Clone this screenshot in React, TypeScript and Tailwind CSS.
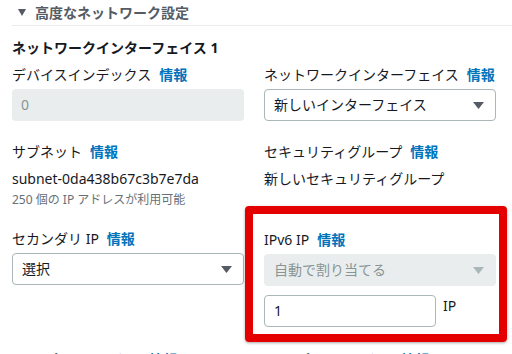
const font = { fontFamily: '"Noto Sans", "Noto Sans CJK JP", sans-serif' };

function Info() {
  return <span className="ml-2 font-bold text-[#0073bb]">情報</span>;
}

function Caret({ muted }: { muted?: boolean }) {
  return (
    <svg width="11" height="7" viewBox="0 0 11 7" className="shrink-0">
      <polygon points="0,0 11,0 5.5,7" fill={muted ? "#aab7b8" : "#545b64"} />
    </svg>
  );
}

function Label({ children }: { children: React.ReactNode }) {
  return <div className="h-5 text-sm leading-5 text-[#16191f] whitespace-nowrap">{children}</div>;
}

function Select({ value, disabled }: { value: string; disabled?: boolean }) {
  return (
    <div
      className={
        disabled
          ? "mt-1 flex h-8 items-center justify-between rounded-sm bg-[#eaeded] pl-[10px] pr-3 text-sm text-[#879596]"
          : "mt-1 flex h-8 items-center justify-between rounded-sm border border-[#aab7b8] bg-white pl-[9px] pr-[11px] text-sm text-[#16191f]"
      }
    >
      <span>{value}</span>
      <Caret muted={disabled} />
    </div>
  );
}

export default function App() {
  return (
    <div className="h-[354px] w-[512px] overflow-hidden bg-white" style={font}>
      {/* Section header */}
      <div className="flex h-[25px] items-center pl-[18px] text-sm font-bold text-[#545b64]">
        <svg width="8" height="7" viewBox="0 0 8 7" className="shrink-0">
          <polygon points="0,0 8,0 4,7" fill="#545b64" />
        </svg>
        <span className="ml-[9px]">高度なネットワーク設定</span>
      </div>
      <div className="ml-3 h-px bg-[#eaeded]" />

      <div className="pl-3 pr-4">
        <div className="mt-3 h-5 text-sm font-bold leading-5 text-[#16191f]">ネットワークインターフェイス 1</div>

        <div className="mt-[7px] grid w-[484px] grid-cols-2 gap-x-5">
          {/* Row 1 */}
          <div>
            <Label>
              デバイスインデックス<Info />
            </Label>
            <div className="mt-1 flex h-8 items-center rounded-sm bg-[#eaeded] pl-[9px] text-sm text-[#879596]">0</div>
          </div>
          <div>
            <Label>
              ネットワークインターフェイス<Info />
            </Label>
            <Select value="新しいインターフェイス" />
          </div>

          {/* Row 2 */}
          <div className="mt-[21px]">
            <Label>
              サブネット<Info />
            </Label>
            <div className="mt-[7px] h-5 text-sm leading-5 text-[#16191f]">subnet-0da438b67c3b7e7da</div>
            <div className="mt-[3px] h-4 text-xs leading-4 text-[#687078]">250 個の IP アドレスが利用可能</div>
          </div>
          <div className="mt-[21px]">
            <Label>
              セキュリティグループ<Info />
            </Label>
            <div className="mt-[7px] h-5 text-sm leading-5 text-[#16191f]">新しいセキュリティグループ</div>
          </div>

          {/* Row 3 */}
          <div className="mt-[21px]">
            <Label>
              セカンダリ IP<Info />
            </Label>
            <Select value="選択" />
          </div>
          <div className="relative mt-[22px]">
            <Label>
              IPv6 IP<Info />
            </Label>
            <Select value="自動で割り当てる" disabled />
            <div className="mt-[9px] flex items-start">
              <div className="flex h-8 w-[172px] items-center rounded-sm border border-[#aab7b8] pl-[9px] text-sm text-[#16191f]">1</div>
              <span className="ml-[7px] mt-[1px] text-sm text-[#16191f]">IP</span>
            </div>
            {/* annotation box */}
            <div className="pointer-events-none absolute -left-[19px] -right-[11px] -top-[24px] -bottom-[15px] rounded-[4px] border-[8px] border-[#e50000] shadow-[0_1px_3px_rgba(0,0,0,0.35)]" />
          </div>

          {/* Row 4 (cut off) */}
          <div className="mt-[23px]">
            <Label>
              IPv4 プレフィックス<Info />
            </Label>
          </div>
          <div className="mt-[23px]">
            <Label>
              IPv6 プレフィックス<Info />
            </Label>
          </div>
        </div>
      </div>
    </div>
  );
}
